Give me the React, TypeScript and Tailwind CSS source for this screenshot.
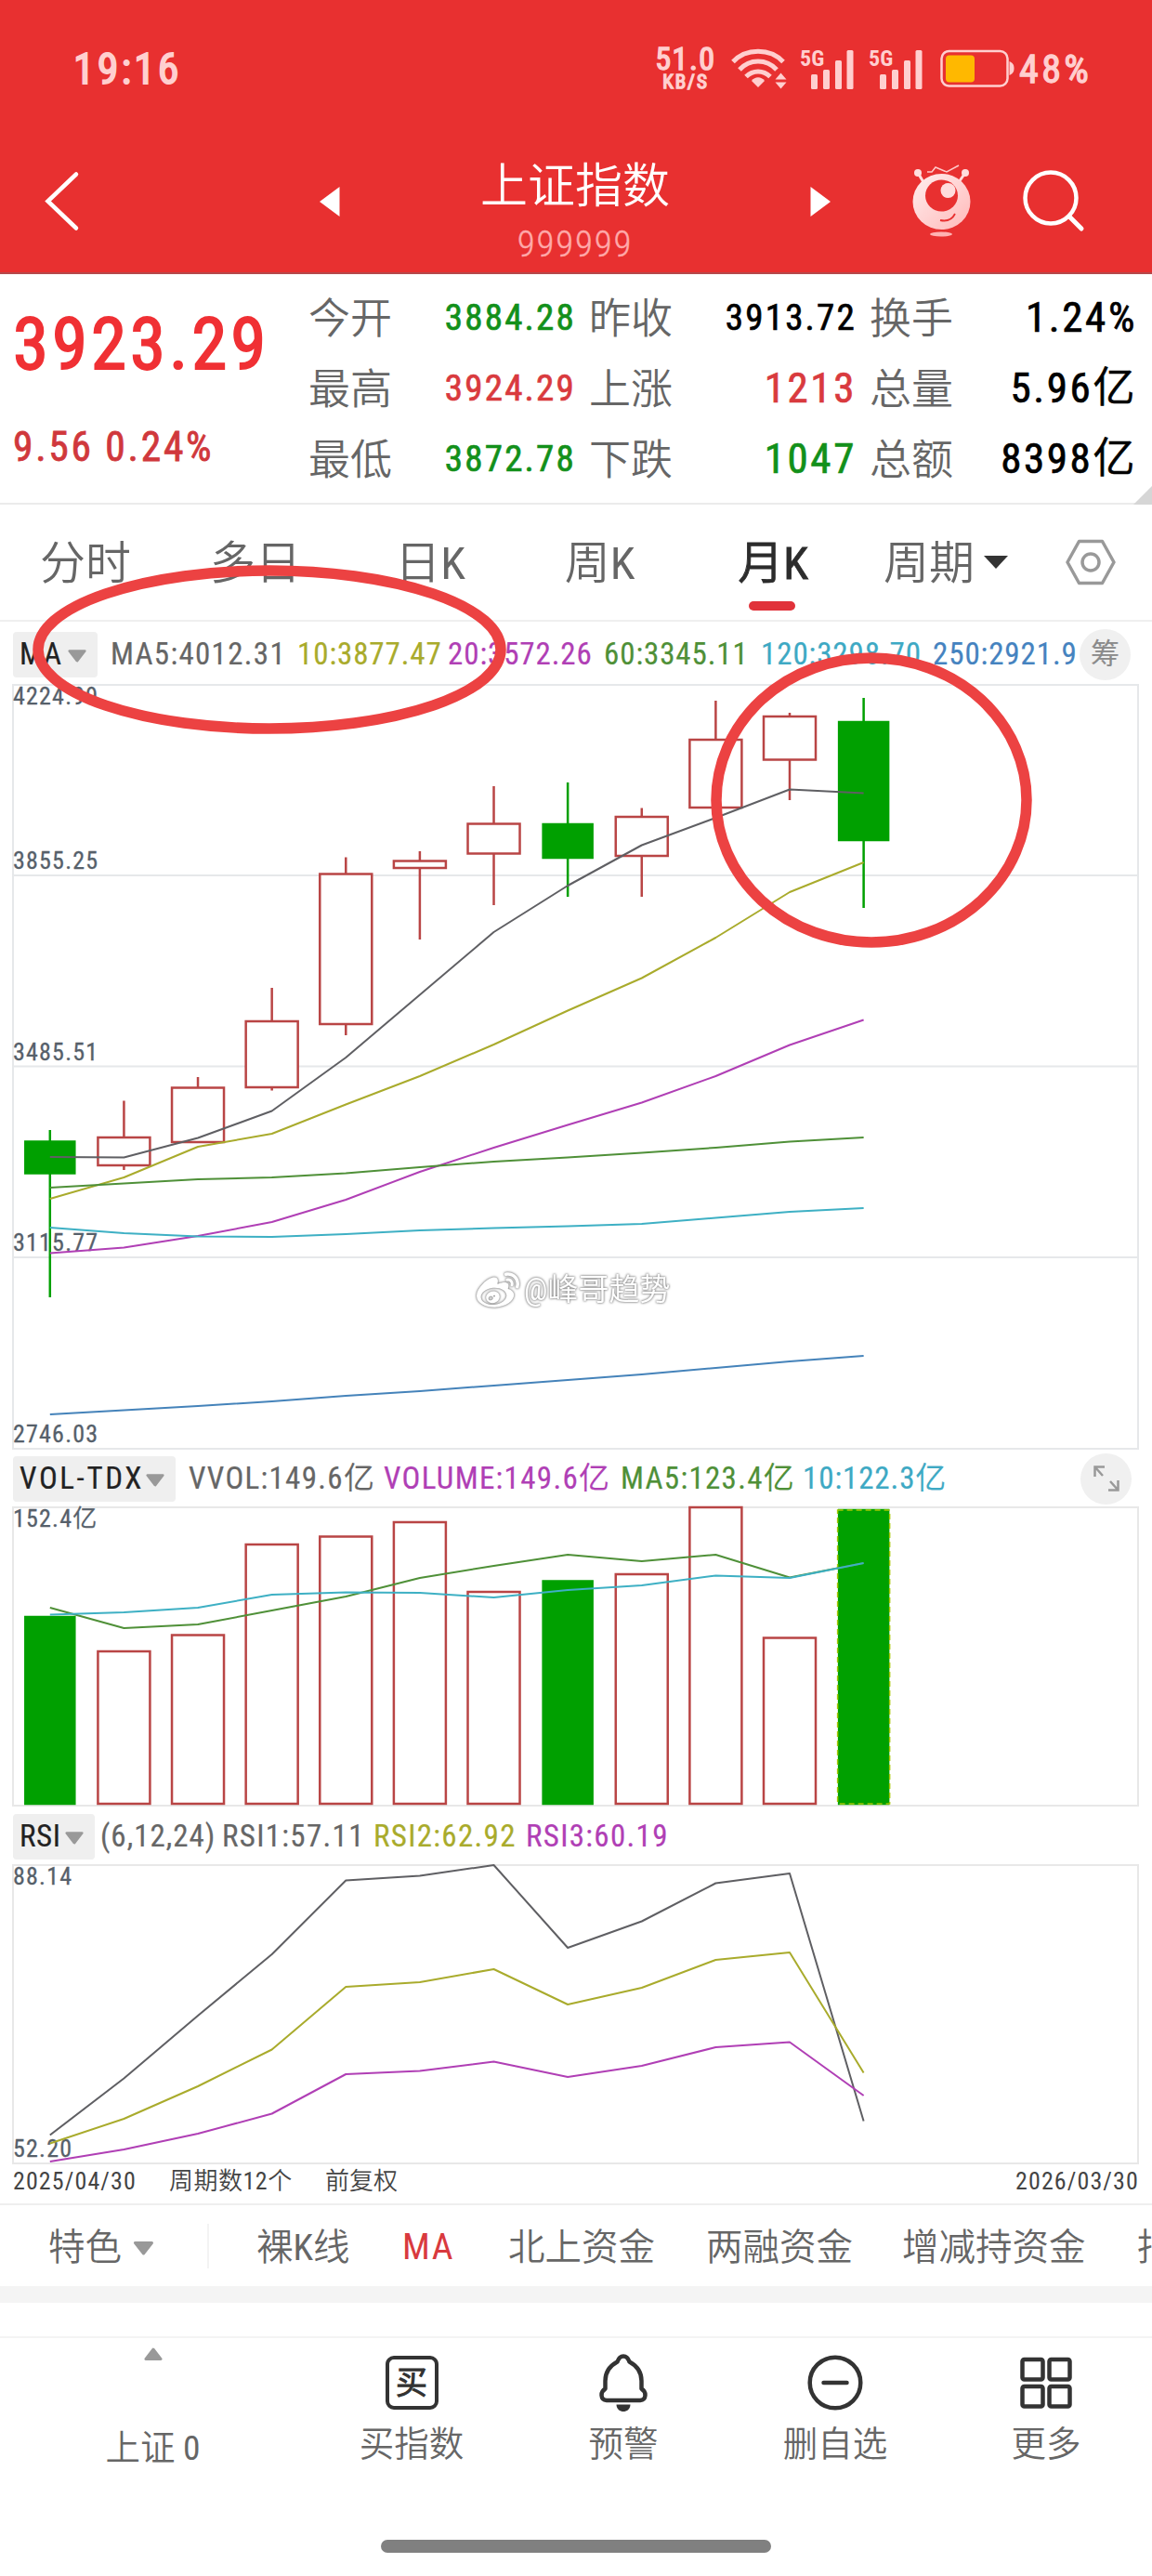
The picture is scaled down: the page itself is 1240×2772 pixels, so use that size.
import type { ReactNode } from "react";
import { SiSinaweibo } from "react-icons/si";

const X0 = 53.8;
const STEP = 79.62;
const cx = (i: number) => X0 + STEP * i;

const UP = "#b94545";
const DOWN = "#00a000";

type Candle = { top: number; bottom: number; high: number; low: number; down?: boolean };

const candles: Candle[] = [
  { top: 492.5, bottom: 526.5, high: 480, low: 660, down: true },
  { top: 488, bottom: 518, high: 448.5, low: 523 },
  { top: 434.5, bottom: 493, high: 423, low: 434 },
  { top: 363, bottom: 434, high: 327, low: 437.5 },
  { top: 204.5, bottom: 366, high: 186.5, low: 378 },
  { top: 190.5, bottom: 198, high: 180, low: 275 },
  { top: 150.5, bottom: 182.5, high: 110, low: 238 },
  { top: 151, bottom: 187, high: 106, low: 229, down: true },
  { top: 143, bottom: 185, high: 133.5, low: 229 },
  { top: 60, bottom: 133, high: 18, low: 133 },
  { top: 35, bottom: 81.5, high: 31, low: 125 },
  { top: 41, bottom: 168, high: 15, low: 241, down: true },
];

const priceLines = [
  { color: "#5f5f63", values: [509, 509.5, 488.5, 459.5, 402, 334.5, 267, 217, 173.5, 144, 113.5, 117.5] },
  { color: "#a9ab2c", values: [554, 531, 498, 484, 452.5, 422, 388, 351.5, 316.5, 273, 224, 192] },
  { color: "#b03fb5", values: [612.5, 606.5, 594, 579, 555, 525, 499, 474.5, 450.5, 422, 388.5, 361.5] },
  { color: "#4f9038", values: [542, 537.5, 533, 531, 526.5, 520, 514, 509.5, 504.5, 499, 492.5, 488] },
  { color: "#3eb0c4", values: [585, 591, 594.5, 595, 592, 588, 585.5, 583.5, 581, 574.5, 568, 564] },
  { color: "#4583ba", values: [786, 781.5, 777, 772, 766, 761, 755, 749, 743, 736, 729, 723] },
];

const volumes = [
  { top: 119, down: true },
  { top: 156 },
  { top: 138.5 },
  { top: 41 },
  { top: 32.5 },
  { top: 17 },
  { top: 92 },
  { top: 80.5, down: true },
  { top: 73 },
  { top: 1 },
  { top: 141.5 },
  { top: 4, down: true, current: true },
];

const volumeLines = [
  { color: "#4f9038", values: [109, 131, 127, 112, 97, 77, 64, 52, 59, 52, 76.5, 61] },
  { color: "#3eb0c4", values: [116.5, 114, 109, 95, 92.5, 93, 98, 90, 85, 74.5, 77, 61] },
];

const rsiLines = [
  { color: "#5f5f63", values: [291.5, 230.5, 163, 97, 17.5, 12.5, 1, 90, 61.5, 20.5, 10, 276.5] },
  { color: "#a9ab2c", values: [300.5, 274, 239, 199.5, 132, 127, 113, 151, 133, 103, 95, 224.5] },
  { color: "#b03fb5", values: [320, 307, 290, 268.5, 226, 222.5, 212.5, 229, 217, 197, 191.5, 249] },
];

const SMALL = "text-[39px] tracking-[2.2px]";
const LARGE = "text-[45px] tracking-[2.6px]";

const quoteRows = [
  ["今开", "3884.28", `${SMALL} text-[#12901a]`, "昨收", "3913.72", `${SMALL} text-black`, "换手", "1.24%"],
  ["最高", "3924.29", `${SMALL} text-[#d93a3e]`, "上涨", "1213", `${LARGE} text-[#d93a3e]`, "总量", "5.96亿"],
  ["最低", "3872.78", `${SMALL} text-[#12901a]`, "下跌", "1047", `${LARGE} text-[#12901a]`, "总额", "8398亿"],
];

function Polyline({ color, values }: { color: string; values: number[] }) {
  return (
    <polyline
      fill="none"
      stroke={color}
      strokeWidth="2"
      strokeLinejoin="round"
      points={values.map((y, i) => `${cx(i)},${y}`).join(" ")}
    />
  );
}

function AxisLabel({ y, children }: { y: number; children: ReactNode }) {
  return (
    <text x="14" y={y} className="fill-[#56606a] stroke-[#56606a] stroke-[0.3] text-[26px] tracking-[1.2px]">
      {children}
    </text>
  );
}

function Caret({ className }: { className: string }) {
  return (
    <svg viewBox="0 0 24 15" className={`shrink-0 ${className}`}>
      <path d="M3 1.5h18L12 13z" fill="#999" stroke="#999" strokeWidth="3" strokeLinejoin="round" />
    </svg>
  );
}

function StatusBar() {
  return (
    <div className="flex h-[148px] items-center pl-[79px] text-[#ffcfcf]">
      <span className="w-[623px] text-[46px] tracking-[3px] [-webkit-text-stroke:1.8px]">19:16</span>
      <div className="flex w-[72px] flex-col items-center [-webkit-text-stroke:1.5px]">
        <span className="text-[34px] leading-[27px] tracking-[1.5px]">51.0</span>
        <span className="text-[21px] leading-[22px] tracking-[2px]">KB/S</span>
      </div>
      <svg viewBox="0 0 60 44" className="ml-[13px] h-[44px] w-[60px]" fill="none" stroke="currentColor" strokeWidth="5">
        <path d="M2 14.500C16 -0.500 42 -0.500 56 14.500" />
        <path d="M9 23C20 11 38 11 49 23" />
        <path d="M16 30.500C23.500 23 34.500 23 42 30.500" />
        <path d="M29 42l-7-7c3.500-5 10.500-5 14 0z" fill="currentColor" stroke="none" />
        <path d="M47.500 33.500l6-7 6 7zM47.500 36.500l6 7 6-7z" fill="currentColor" stroke="none" />
      </svg>
      <Signal />
      <Signal />
      <svg viewBox="0 0 80 42" className="ml-[17px] h-[42px] w-[80px]">
        <rect x="1.500" y="2" width="71" height="37.500" rx="8" fill="none" stroke="currentColor" strokeWidth="2.500" />
        <path d="M74.500 13c4 2 5 4 5 7.500s-1 5.500-5 7.500z" fill="currentColor" />
        <rect x="6" y="6.500" width="31" height="29" rx="4" fill="#ffb800" />
      </svg>
      <span className="ml-[5px] text-[42px] tracking-[3.4px] [-webkit-text-stroke:1.3px]">48%</span>
    </div>
  );
}

function Signal() {
  return (
    <svg viewBox="0 0 60 44" className="ml-[14px] h-[44px] w-[60px] overflow-visible" fill="currentColor">
      <text x="0" y="18.500" className="text-[24px] font-bold">
        5G
      </text>
      <rect x="12" y="28" width="7" height="16" rx="1.500" />
      <rect x="25" y="23" width="7" height="21" rx="1.500" />
      <rect x="38" y="13" width="7" height="31" rx="1.500" />
      <rect x="50.500" y="2" width="7" height="42" rx="1.500" />
    </svg>
  );
}

function TitleBar() {
  return (
    <div className="flex h-[145px] items-start text-white">
      <svg viewBox="0 0 44 72" className="mt-[32px] ml-[44px] h-[72px] w-[44px]">
        <path d="M38 7.500L7.500 36.500L38 65.500" fill="none" stroke="currentColor" strokeWidth="4.500" strokeLinecap="round" />
      </svg>
      <svg viewBox="0 0 22 32" className="mt-[53px] ml-[256px] h-[32px] w-[22px]">
        <path d="M21.500 0v32L0 16z" fill="currentColor" />
      </svg>
      <div className="flex w-[506px] flex-col items-center">
        <h1 className="mt-[18px] text-[51px] leading-[70px]">上证指数</h1>
        <span className="mt-[4px] text-[39px] leading-[46px] font-light tracking-[1.8px] text-[#ffa9a9] [-webkit-text-stroke:0.4px]">
          999999
        </span>
      </div>
      <svg viewBox="0 0 22 32" className="mt-[53px] h-[32px] w-[22px]">
        <path d="M0.500 0v32L22 16z" fill="currentColor" />
      </svg>
      <svg viewBox="0 0 64 78" className="mt-[29px] ml-[88px] h-[78px] w-[64px]">
        <defs>
          <linearGradient id="mascot" x1="0" y1="0" x2="1" y2="1">
            <stop offset="0" stopColor="#ffeeee" />
            <stop offset="1" stopColor="#ffb9b9" />
          </linearGradient>
        </defs>
        <path d="M6 9l6 10M57 9l-7 10" stroke="#ffdede" strokeWidth="3" />
        <circle cx="6" cy="9" r="4" fill="#ffdede" />
        <circle cx="57" cy="9" r="4" fill="#ffdede" />
        <path d="M16 8h5l4-5 12 5L50 1" fill="none" stroke="#ffc9c9" strokeWidth="1.500" />
        <ellipse cx="31.500" cy="40" rx="31" ry="30" fill="url(#mascot)" />
        <ellipse cx="31.500" cy="33.500" rx="17.500" ry="17" fill="#e83030" />
        <ellipse cx="38.500" cy="28" rx="8" ry="8" fill="#ffdcdc" />
        <path d="M30 60c7 1.500 13-1 16-7" fill="none" stroke="#e83030" strokeWidth="1.800" />
        <ellipse cx="31" cy="75" rx="12" ry="2.500" fill="#ffb3b3" />
      </svg>
      <svg viewBox="0 0 72 72" className="mt-[33px] ml-[52px] h-[72px] w-[72px]" fill="none" stroke="currentColor" strokeLinecap="round">
        <circle cx="33" cy="32" r="27.500" strokeWidth="4.500" />
        <path d="M53 52l13 13" strokeWidth="5" />
      </svg>
    </div>
  );
}

function Quote() {
  return (
    <section className="relative flex h-[248px] border-b-2 border-[#ebebeb]">
      <div className="w-[332px] pl-[14px]">
        <div className="mt-[30px] text-[77px] leading-[92px] tracking-[4px] text-[#f03034] [-webkit-text-stroke:1.8px]">3923.29</div>
        <div className="mt-[37px] text-[43.5px] leading-[56px] tracking-[2.7px] text-[#d0383c] [-webkit-text-stroke:0.8px]">
          9.56 0.24%
        </div>
      </div>
      <div className="mt-[9px] flex flex-col">
        {quoteRows.map(([l1, v1, c1, l2, v2, c2, l3, v3]) => (
          <div key={l1} className="grid h-[76px] grid-cols-[287px_287px_287px] items-center gap-x-[15px]">
            <QuoteCell label={l1} value={v1} className={c1} />
            <QuoteCell label={l2} value={v2} className={c2} />
            <QuoteCell label={l3} value={v3} className={`${LARGE} text-black`} />
          </div>
        ))}
      </div>
      <svg viewBox="0 0 20 20" className="absolute right-0 -bottom-[2px] size-5">
        <path d="M20 0v20H0z" fill="#d6d6d6" />
      </svg>
    </section>
  );
}

function QuoteCell({ label, value, className }: { label: string; value: string; className: string }) {
  return (
    <div className="flex items-center justify-between">
      <span className="pt-[3px] text-[45px] leading-[73px] text-[#666]">{label}</span>
      <span className={`-mr-[1px] leading-[76px] [-webkit-text-stroke:0.7px] ${className}`}>{value}</span>
    </div>
  );
}

function PeriodTabs() {
  return (
    <nav className="grid h-[126px] grid-cols-[184px_182px_199px_163px_208px_164px_140px] border-b-2 border-[#efefef] pt-[3px] text-center text-[49px] leading-[121px] text-[#666]">
      <span>分时</span>
      <span>多日</span>
      <span className="-ml-[5px]">日K</span>
      <span className="-ml-[2px]">周K</span>
      <span className="relative text-[#2c2c2c] [-webkit-text-stroke:0.9px]">
        月K
        <i className="absolute bottom-[10px] left-[78px] h-[10px] w-[50px] rounded-full bg-[#e1323a]" />
      </span>
      <span className="flex items-center justify-center gap-[10px]">
        周期
        <svg viewBox="0 0 26 14" className="-mt-[3px] h-[14px] w-[26px]">
          <path d="M0 0h26L13 14z" fill="#333" />
        </svg>
      </span>
      <span className="flex items-center justify-center pb-[3px] pl-[8px]">
        <svg viewBox="0 0 54 50" className="h-[50px] w-[54px]" fill="none" stroke="#999" strokeWidth="3.500" strokeLinejoin="round">
          <path d="M14.500 2.500h25L52 25 39.500 47.500h-25L2 25z" />
          <circle cx="27" cy="25" r="9" />
        </svg>
      </span>
    </nav>
  );
}

type IndicatorRowProps = { name: string; className: string; badgeClass: string; children: ReactNode };

function IndicatorRow({ name, className, badgeClass, children }: IndicatorRowProps) {
  return (
    <div className={`flex items-center pl-[14px] text-[33px] leading-[50px] whitespace-nowrap [-webkit-text-stroke:0.2px] ${className}`}>
      <div className={`flex h-[49px] shrink-0 items-center justify-between rounded bg-[#efefef] pr-[11px] pl-[7px] text-[#222] ${badgeClass}`}>
        <span>{name}</span>
        <Caret className="mt-[4px] h-[14px] w-[22px]" />
      </div>
      {children}
    </div>
  );
}

function PricePanel() {
  return (
    <section className="relative">
      <IndicatorRow name="MA" className="h-[67px] pt-[3px] tracking-[0.9px]" badgeClass="w-[91px]">
        <span className="ml-[14px] w-[201px] tracking-[1.3px] text-[#666]">MA5:4012.31</span>
        <span className="w-[162px] text-[#a9ab2c]">10:3877.47</span>
        <span className="w-[168px] text-[#b03fb5]">20:3572.26</span>
        <span className="w-[169px] text-[#4f9038]">60:3345.11</span>
        <span className="w-[185px] text-[#3ea9c4]">120:3298.70</span>
        <span className="w-[158px] text-[#4583c0]">250:2921.9</span>
        <span className="flex size-[55px] shrink-0 items-center justify-center rounded-full bg-[#f0f0f0] text-[31px] tracking-normal text-[#8a8a8a]">
          筹
        </span>
      </IndicatorRow>
      <svg viewBox="0 0 1240 825" className="block h-[825px] w-[1240px] overflow-visible">
        <g fill="none" stroke="#e6e8ea" strokeWidth="2">
          <rect x="14" y="1" width="1211" height="822" />
          <path d="M14 206h1211M14 411.500h1211M14 617h1211" />
        </g>
        <AxisLabel y={22}>4224.99</AxisLabel>
        <AxisLabel y={199}>3855.25</AxisLabel>
        <AxisLabel y={405}>3485.51</AxisLabel>
        <AxisLabel y={610}>3115.77</AxisLabel>
        <AxisLabel y={816}>2746.03</AxisLabel>
        {candles.map(({ top, bottom, high, low, down }, i) => (
          <g key={i} stroke={down ? DOWN : UP} strokeWidth="2.500">
            <path d={`M${cx(i)} ${high}V${top}M${cx(i)} ${bottom}V${low}`} />
            <rect
              x={cx(i) - (down ? 26.5 : 28)}
              y={top}
              width={down ? 53 : 56}
              height={bottom - top}
              fill={down ? DOWN : "#fff"}
            />
          </g>
        ))}
        {priceLines.map((line) => (
          <Polyline key={line.color} {...line} />
        ))}
      </svg>
      <div className="absolute top-[696px] left-[513px] flex items-center gap-[5px] text-[33px] leading-[44px] text-white [filter:drop-shadow(0_0_1px_#888)_drop-shadow(0_0_1px_#aaa)]">
        <SiSinaweibo className="size-[46px]" />
        <span>@峰哥趋势</span>
      </div>
    </section>
  );
}

function VolumePanel() {
  return (
    <section>
      <IndicatorRow name="VOL-TDX" className="h-[60px] tracking-[1.3px]" badgeClass="w-[175px] tracking-[2.6px]">
        <span className="ml-[14px] w-[210px] text-[#666]">VVOL:149.6亿</span>
        <span className="w-[255px] text-[#b03fb5]">VOLUME:149.6亿</span>
        <span className="w-[196px] text-[#4f9038]">MA5:123.4亿</span>
        <span className="w-[299px] tracking-[0.9px] text-[#3ea9c4]">10:122.3亿</span>
        <span className="flex size-[55px] shrink-0 items-center justify-center rounded-full bg-[#f0f0f0]">
          <svg viewBox="0 0 30 30" className="size-[30px]" fill="none" stroke="#999" strokeWidth="2.500">
            <path d="M2.500 13V2.500H13M2.500 2.500L11 12M27.500 17v10.500H17M27.500 27.500L19 18" />
          </svg>
        </span>
      </IndicatorRow>
      <svg viewBox="0 0 1240 325" className="block h-[325px] w-[1240px] overflow-visible">
        <rect x="14" y="1" width="1211" height="321" fill="none" stroke="#e8e8e8" strokeWidth="2" />
        <AxisLabel y={22}>152.4亿</AxisLabel>
        {volumes.map(({ top, down }, i) => (
          <rect
            key={i}
            x={cx(i) - (down ? 26.5 : 28)}
            y={top}
            width={down ? 53 : 56}
            height={320 - top}
            fill={down ? DOWN : "#fff"}
            stroke={down ? DOWN : UP}
            strokeWidth="2.500"
          />
        ))}
        {volumes[11].current && (
          <rect x={cx(11) - 28} y="4" width="56" height="316" fill="none" stroke="#a5c800" strokeWidth="1.500" strokeDasharray="6 4" />
        )}
        {volumeLines.map((line) => (
          <Polyline key={line.color} {...line} />
        ))}
      </svg>
    </section>
  );
}

function RsiPanel() {
  return (
    <section>
      <IndicatorRow name="RSI" className="h-[60px] tracking-[1.3px]" badgeClass="w-[88px] tracking-[0.5px]">
        <span className="ml-[6px] w-[131px] tracking-[1px] text-[#666]">(6,12,24)</span>
        <span className="w-[163px] text-[#666]">RSI1:57.11</span>
        <span className="w-[164px] text-[#a9ab2c]">RSI2:62.92</span>
        <span className="text-[#b03fb5]">RSI3:60.19</span>
      </IndicatorRow>
      <svg viewBox="0 0 1240 323" className="block h-[323px] w-[1240px] overflow-visible">
        <rect x="14" y="1" width="1211" height="321" fill="none" stroke="#e8e8e8" strokeWidth="2" />
        <AxisLabel y={22}>88.14</AxisLabel>
        <AxisLabel y={315}>52.20</AxisLabel>
        {rsiLines.map((line) => (
          <Polyline key={line.color} {...line} />
        ))}
      </svg>
      <div className="flex h-[44px] border-b-2 border-[#efefef] pr-[14px] pl-[14px] text-[26px] leading-[37px] tracking-[1.1px] text-[#444]">
        <span className="w-[168px]">2025/04/30</span>
        <span className="w-[168px] tracking-[0.5px]">周期数12个</span>
        <span className="tracking-normal">前复权</span>
        <span className="ml-auto">2026/03/30</span>
      </div>
    </section>
  );
}

function FeatureTabs() {
  return (
    <>
      <div className="flex h-[87px] items-center overflow-hidden text-[39.5px] leading-[87px] whitespace-nowrap text-[#666]">
        <span className="ml-[52px] w-[90px] shrink-0 pt-[3px]">特色</span>
        <Caret className="mt-[6px] h-[15px] w-[25px]" />
        <span className="ml-[56px] h-[48px] w-[2px] shrink-0 bg-[#f3f3f3]" />
        <span className="ml-[51px] w-[157px] shrink-0 pt-[3px]">裸K线</span>
        <span className="w-[114px] shrink-0 pt-[1px] tracking-[1.5px] text-[#d93a3e]">MA</span>
        <span className="w-[213px] shrink-0 pt-[3px]">北上资金</span>
        <span className="w-[211px] shrink-0 pt-[3px]">两融资金</span>
        <span className="w-[253px] shrink-0 pt-[3px]">增减持资金</span>
        <span className="shrink-0 pt-[3px]">指</span>
      </div>
      <div className="h-[18px] bg-[#f4f4f4]" />
    </>
  );
}

function BottomItem({ label, children }: { label: string; children: ReactNode }) {
  return (
    <div className="flex flex-col items-center">
      <div className="mt-[14px] flex h-[68px] items-center justify-center">{children}</div>
      <span className="mt-[6px] text-[37.5px] leading-[52px]">{label}</span>
    </div>
  );
}

function BottomBar() {
  return (
    <nav className="mt-[36px] grid h-[219px] grid-cols-[329px_228px_228px_228px_226px] border-t-2 border-[#f4f4f4] text-[#666]">
      <div className="flex flex-col items-center">
        <Caret className="mt-[10px] h-[14px] w-[22px] rotate-180" />
        <span className="mt-[68px] text-[37.5px] leading-[52px]">上证 0</span>
      </div>
      <BottomItem label="买指数">
        <span className="flex h-[58px] w-[57px] items-center justify-center rounded-[9px] border-[4px] border-[#333] text-[34px] leading-none font-bold text-[#333]">
          买
        </span>
      </BottomItem>
      <BottomItem label="预警">
        <svg viewBox="0 0 54 64" className="h-[64px] w-[54px]">
          <path
            d="M20.500 9.500C22 5 24.500 3.500 27 3.500S32 5 33.500 9.500C42 14 46.500 21 46.500 30v8.500c5.500 3.500 5.500 12-1.500 12.500H9c-7-.5-7-9-1.500-12.500V30C7.500 21 12 14 20.500 9.500z"
            fill="none"
            stroke="#333"
            strokeWidth="4.500"
            strokeLinejoin="round"
          />
          <path d="M19.500 55.500h15c0 5-4 7.500-7.500 7.500s-7.500-2.500-7.500-7.500z" fill="#333" />
        </svg>
      </BottomItem>
      <BottomItem label="删自选">
        <svg viewBox="0 0 60 60" className="size-[60px]" fill="none" stroke="#333" strokeWidth="4.500" strokeLinecap="round">
          <circle cx="30" cy="30" r="27.300" />
          <path d="M17.500 30h25" />
        </svg>
      </BottomItem>
      <BottomItem label="更多">
        <svg viewBox="0 0 56 56" className="size-[56px]" fill="none" stroke="#333" strokeWidth="4.500">
          <rect x="2.500" y="3" width="22" height="21.500" rx="2" />
          <rect x="31.500" y="3" width="22" height="21.500" rx="2" />
          <rect x="2.500" y="32" width="22" height="21.500" rx="2" />
          <rect x="31.500" y="32" width="22" height="21.500" rx="2" />
        </svg>
      </BottomItem>
    </nav>
  );
}

export default function App() {
  return (
    <div className="relative h-[2772px] w-[1240px] overflow-hidden bg-white font-['Roboto_Condensed','Noto_Sans_CJK_SC_DemiLight','Noto_Sans_CJK_SC',sans-serif]">
      <header className="border-b-2 border-[#b5484a] bg-[#e83030]">
        <StatusBar />
        <TitleBar />
      </header>
      <Quote />
      <PeriodTabs />
      <PricePanel />
      <VolumePanel />
      <RsiPanel />
      <FeatureTabs />
      <BottomBar />
      <div className="mx-auto h-[14px] w-[420px] rounded-full bg-[#808080]" />

      {/* hand-drawn highlights over the chart */}
      <svg viewBox="0 0 1240 2772" className="pointer-events-none absolute inset-0" fill="none" stroke="#ec4242" strokeWidth="11.500">
        <ellipse cx="290" cy="699" rx="249" ry="85" />
        <ellipse cx="938" cy="861" rx="167" ry="153" />
      </svg>
    </div>
  );
}
